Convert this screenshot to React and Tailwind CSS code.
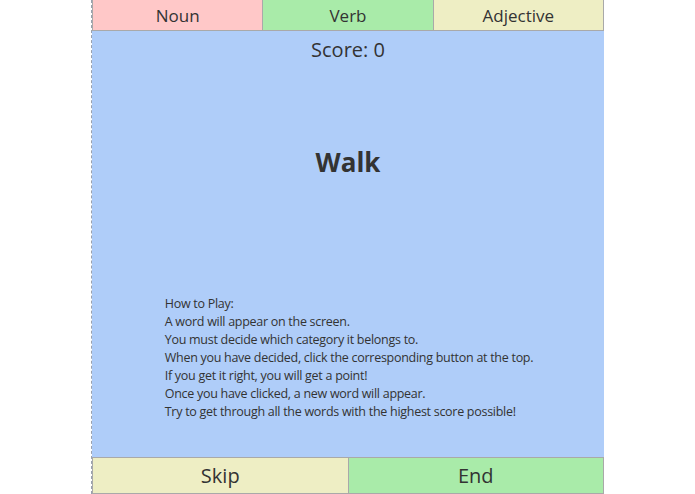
const App = () => {
    return (
        <div className="flex justify-center bg-white" style={{ fontFamily: '"Comic Sans MS", "Open Sans", sans-serif' }}>
            <div className="w-[513px] h-[494px] flex flex-col border-l border-dashed border-gray-400 text-[#333]">
                <nav className="flex h-[31px]">
                    <button className="flex-1 bg-[#ffc8c8] border border-[#a9a9a9] border-t-0 text-[17px] pt-[2px]">Noun</button>
                    <button className="flex-1 bg-[#a9eba9] border-b border-[#a9a9a9] text-[17px] pt-[2px]">Verb</button>
                    <button className="flex-1 bg-[#eeeec4] border border-[#a9a9a9] border-t-0 text-[17px] pt-[2px]">Adjective</button>
                </nav>

                <main className="flex-1 bg-[#afcdf9] flex flex-col items-center">
                    <p className="text-[20px] mt-[4px]">Score: 0</p>
                    <h1 className="text-[26px] font-bold mt-[78px]">Walk</h1>
                    <div className="mt-auto mb-[36px] text-[12.5px] tracking-[-0.28px] leading-[18px] ml-[2px] whitespace-nowrap">
                        <p>How to Play:</p>
                        <p>A word will appear on the screen.</p>
                        <p>You must decide which category it belongs to.</p>
                        <p>When you have decided, click the corresponding button at the top.</p>
                        <p>If you get it right, you will get a point!</p>
                        <p>Once you have clicked, a new word will appear.</p>
                        <p>Try to get through all the words with the highest score possible!</p>
                    </div>
                </main>

                <div className="flex h-[37px]">
                    <button className="flex-1 bg-[#eeeec4] border border-[#a9a9a9] text-[20px]">Skip</button>
                    <button className="flex-1 bg-[#a9eba9] border border-l-0 border-[#a9a9a9] text-[20px]">End</button>
                </div>
            </div>
        </div>
    )
}

export default App
